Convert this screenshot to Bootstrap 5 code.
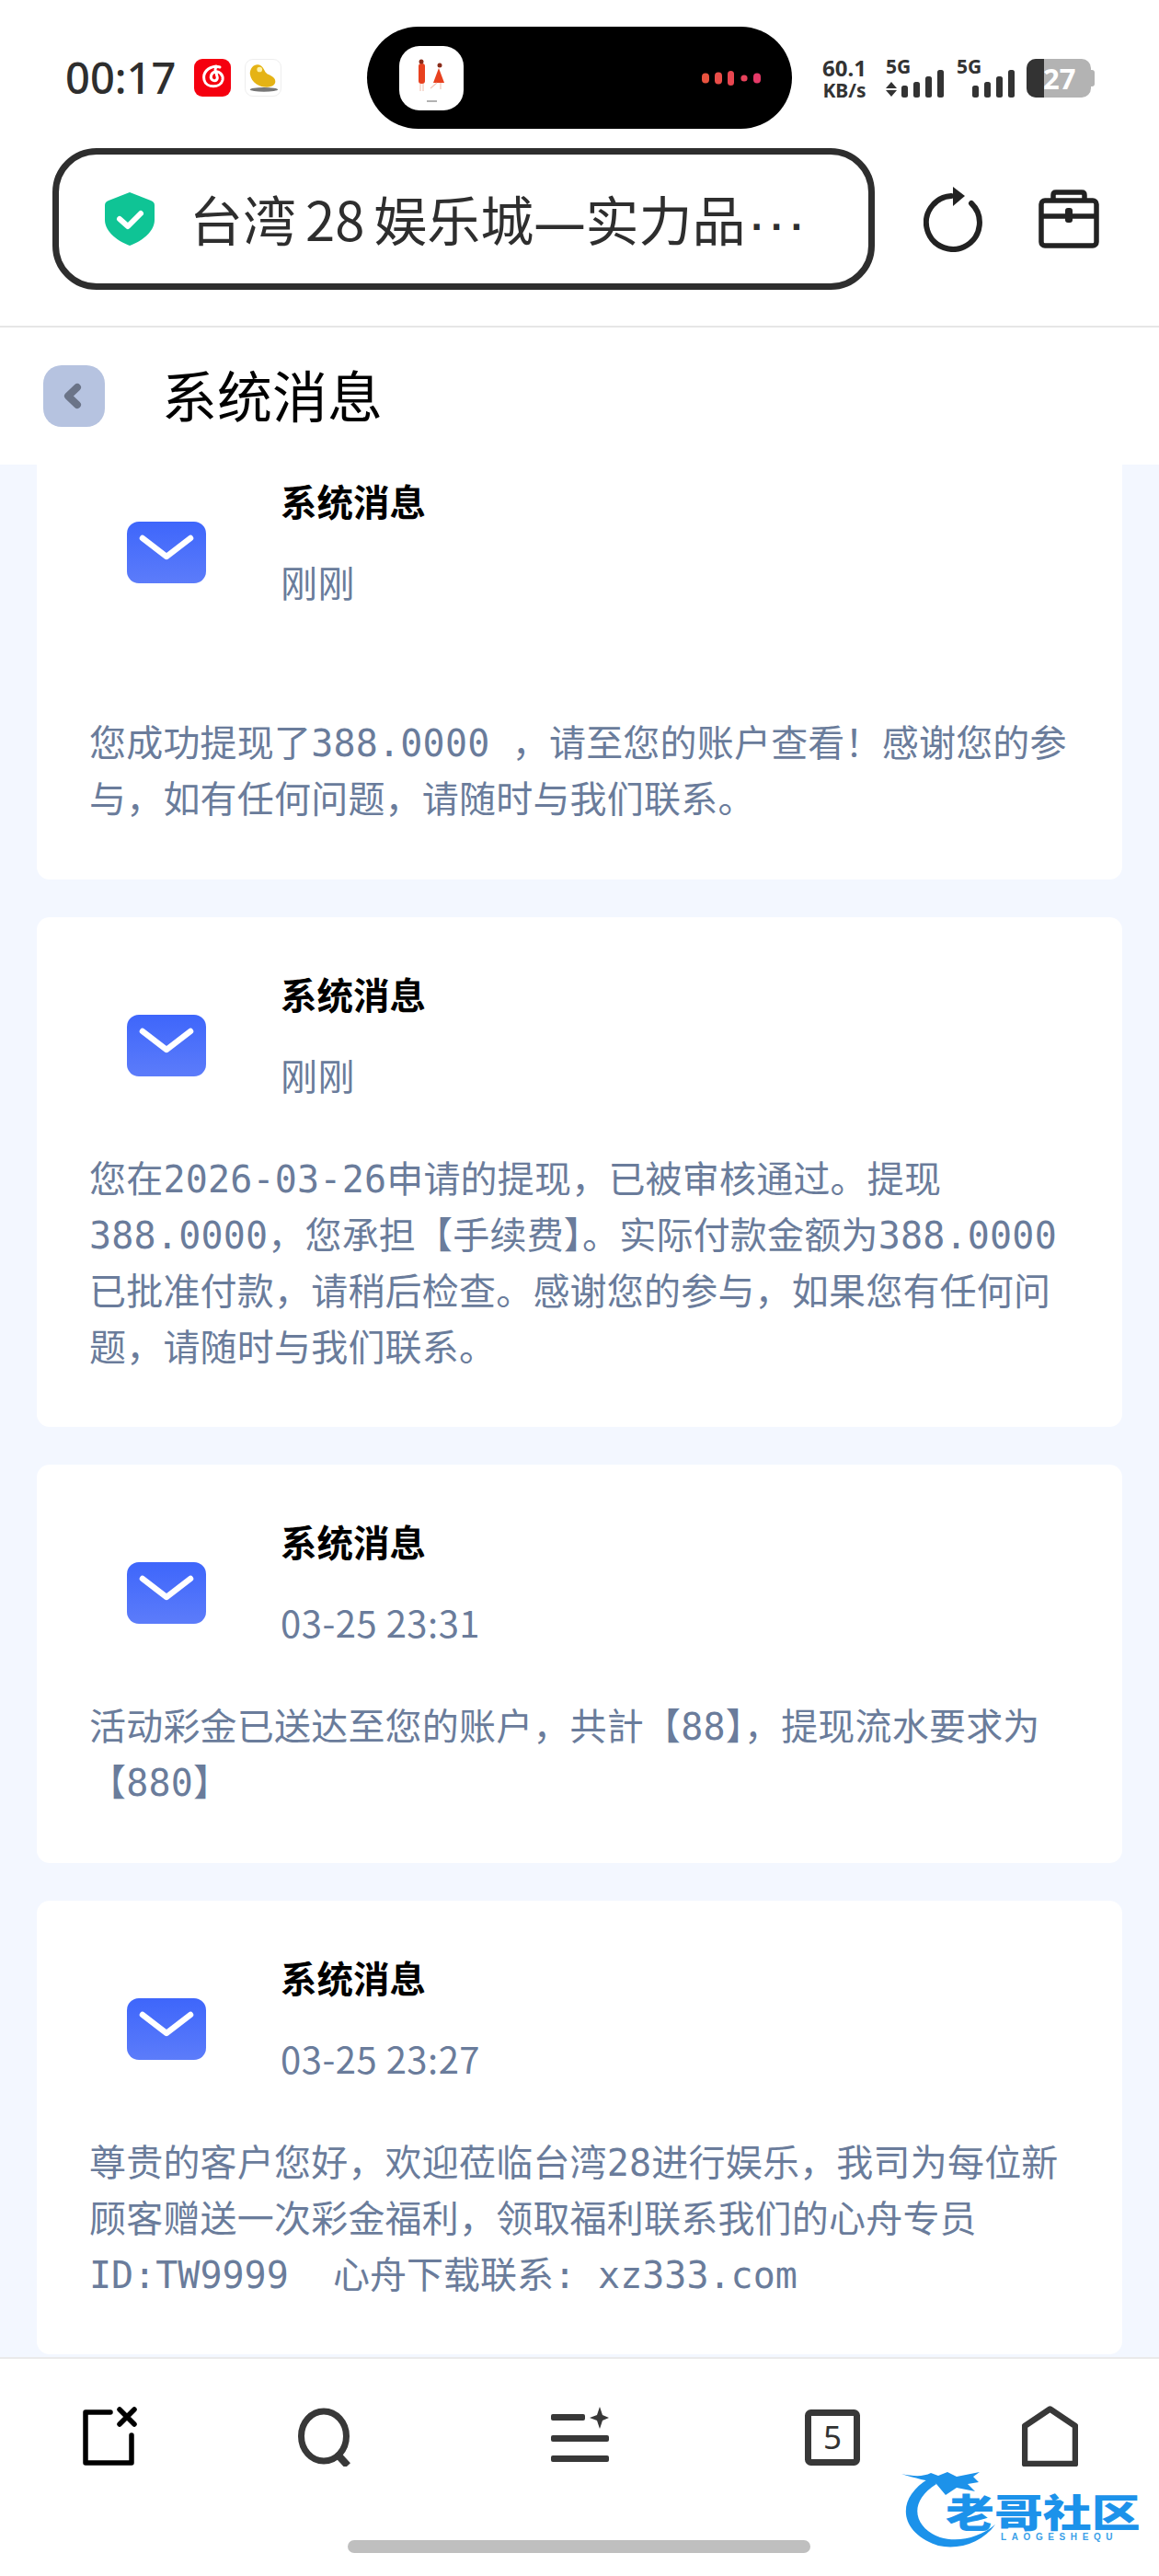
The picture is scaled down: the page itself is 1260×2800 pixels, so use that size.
<!DOCTYPE html>
<html lang="zh-CN">
<head>
<meta charset="UTF-8">
<title>系统消息</title>
<link href="https://cdn.jsdelivr.net/npm/bootstrap@5.3.3/dist/css/bootstrap.min.css" rel="stylesheet">
<script src="https://cdn.jsdelivr.net/npm/bootstrap@5.3.3/dist/js/bootstrap.bundle.min.js"></script>
<style>
html, body { margin: 0; background: #f3f7ff; }
body { width: 1260px; height: 2800px; overflow: hidden; font-family: "Noto Sans CJK SC", "Noto Sans", sans-serif; position: relative; }
.top-area { height: 356px; background: #fff; border-bottom: 2px solid #e6e6e6; padding-top: 29px; }
.status-row { height: 111px; padding-left: 71px; }
.clock { font: 500 47px/1 "Noto Sans", sans-serif; color: #2e2e2e; width: 140px; }
.app-ico { width: 40px; height: 41px; border-radius: 9px; flex: none; }
.ico-red { background: #f5000f; margin-right: 15px; }
.ico-bean { background: #fff; border: 1px solid #eee; }
.island { width: 462px; height: 111px; margin-left: 93px; background: #000; border-radius: 56px; padding: 0 34px 0 35px; flex: none; }
.island-art { width: 70px; height: 70px; background: #fff; border-radius: 22px; }
.speed { margin-left: 32px; width: 50px; color: #333; font: 700 24px/27px "Noto Sans", sans-serif; text-align: center; flex: none; }
.speed span { display: block; font-size: 21px; line-height: 22px; white-space: nowrap; }
.net-one { margin-left: 20px; flex: none; overflow: visible; }
.net-two { margin-left: 14px; flex: none; overflow: visible; }
.batt { width: 70px; height: 42px; margin-left: 13px; border-radius: 10px; background: #b3b3b3; color: #fff; font: 700 31px/42px "Noto Sans", sans-serif; overflow: hidden; position: relative; padding-left: 18px; flex: none; }
.batt i { position: absolute; left: 0; top: 0; bottom: 0; width: 19px; background: #333; }
.batt-tip { width: 4px; height: 18px; background: #b3b3b3; border-radius: 0 3px 3px 0; flex: none; }
.url-row { padding: 21px 0 0 57px; }
.url-box { width: 894px; height: 154px; border: 7px solid #2e2e2e; border-radius: 48px; padding-left: 50px; background: #fff; flex: none; }
.url-text { font-size: 58px; line-height: 1; color: #2e2e2e; margin-left: 38px; white-space: nowrap; word-spacing: -3px; }
.url-dash { font-family: "Noto Sans", sans-serif; font-size: 56px; }
.url-dots { font: 700 44px/1 "Liberation Sans", sans-serif; letter-spacing: 7px; margin-left: 6px; }
.ico-refresh { margin-left: 53px; flex: none; }
.ico-case { margin-left: 61px; flex: none; }
.title-row { height: 149px; background: #fff; padding-left: 47px; }
.back-btn { width: 67px; height: 67px; background: #b6c3e0; border-radius: 20px; }
.page-title { font-size: 60px; line-height: 1; color: #000; margin: -6px 0 0 62px; font-weight: 400; }
.msg-list { padding: 0 40px; }
.msg-card { background: #fff; border: 0; border-radius: 14px; margin-bottom: 41px; padding: 0 57px; }
.msg-card:first-child { border-radius: 0 0 14px 14px; }
.msg-head { padding-left: 40px; padding-top: 61px; }
.msg-card:first-child .msg-head { padding-top: 17px; }
.msg-ico { margin-right: 80px; margin-top: 45px; flex: none; }
.msg-info { margin-top: -2px; }
.msg-name { font-size: 39.500px; line-height: 48px; font-weight: 700; color: #000; }
.msg-time { font-size: 40px; line-height: 48px; color: #6a7c9b; margin-top: 40px; white-space: nowrap; letter-spacing: .5px; }
.msg-text { font: 40px/61px "DejaVu Sans Mono", "Noto Sans CJK SC", monospace; letter-spacing: .2px; color: #6a7c9b; margin: 60px 0 0; }
.msg-card:first-child .msg-text { margin-top: 122px; }
.plain-line { letter-spacing: 0; }
.bottom-bar { position: absolute; left: 0; right: 0; top: 2562px; height: 238px; background: #fff; border-top: 2px solid #eaeaea; }
.tool-row { padding: 51px 0 0 90px; }
.tool-two { margin-left: 175px; }
.tool-three { margin-left: 214px; }
.tool-four { margin-left: 213px; }
.tool-five { margin-left: 176px; }
.gesture { position: absolute; left: 378px; width: 503px; top: 2761px; height: 14px; border-radius: 7px; background: #bfbfbf; }
.logo-mark { position: absolute; left: 980px; top: 2680px; }
.logo-text { position: absolute; left: 1028px; top: 2706px; font-size: 42px; line-height: 46px; height: 46px; font-weight: 900; color: #1c92ea; white-space: nowrap; transform-origin: left top; transform: scaleX(1.26); }
.logo-sub-text { position: absolute; left: 1088px; top: 2753px; font: 700 10px/1 "Liberation Sans", sans-serif; letter-spacing: 5.6px; color: #3a9fe8; white-space: nowrap; }
</style>
</head>
<body>

<div class="top-area">
  <div class="status-row d-flex align-items-center">
    <div class="clock">00:17</div>
    <svg class="app-ico ico-red" viewBox="0 0 40 41"><path d="M24 8c-9 1-15 7-13 15 2 9 18 9 20 0 1-6-4-10-8-9-5 1-6 7-3 9 4 2 6-1 5-4l-2-7c0-3 2-4 5-3" fill="none" stroke="#fff" stroke-width="3" stroke-linecap="round"/></svg>
    <svg class="app-ico ico-bean" viewBox="0 0 40 41"><ellipse cx="21" cy="34" rx="16" ry="2.500" fill="#777"/><path d="M5 16C5 8 12 3 18 7c4 3 3 8 9 10 7 3 9 8 5 12-6 5-25 2-27-13z" fill="#e5b315"/><circle cx="16" cy="11" r="3" fill="#fff2a8"/></svg>
    <div class="island d-flex align-items-center justify-content-between">
      <svg class="island-art" viewBox="0 0 70 70"><rect x="21" y="19" width="7" height="22" rx="3" fill="#e8411f"/><circle cx="24" cy="17" r="2.500" fill="#8a2c1a"/><path d="M23 41v8M26 41v8" stroke="#f2c6b8" stroke-width="1.200"/><path d="M43 24l-6 16h12z" fill="#e8411f"/><circle cx="44" cy="21" r="2.500" fill="#8a2c1a"/><path d="M41 40l-7 6M45 40v7" stroke="#f2c6b8" stroke-width="1.200"/><path d="M30 60h11" stroke="#999" stroke-width="1.500"/></svg>
      <svg width="64" height="16" viewBox="0 0 64 16"><rect x="0" y="2.500" width="8" height="11" rx="4" fill="#e9533f"/><rect x="14" y="1.500" width="8" height="13" rx="4" fill="#ea4d48"/><rect x="28" y="0" width="7" height="16" rx="3.500" fill="#e84650"/><circle cx="46" cy="8" r="3.600" fill="#e8435c"/><rect x="56" y="2.500" width="8" height="11" rx="4" fill="#e63a68"/></svg>
    </div>
    <div class="speed">60.1<span>KB/s</span></div>
    <svg class="net-one" width="63" height="42" viewBox="0 0 63 42" fill="#333"><text x="0" y="16" font-family="Noto Sans" font-weight="700" font-size="21">5G</text><path d="M6 25l6 7H0zM6 41l6-7H0z"/><rect x="17" y="29" width="7" height="13" rx="2.500"/><rect x="30" y="25" width="7" height="17" rx="2.500"/><rect x="43" y="19" width="7" height="23" rx="2.500"/><rect x="56" y="12" width="7" height="30" rx="2.500"/></svg>
    <svg class="net-two" width="63" height="42" viewBox="0 0 63 42" fill="#333"><text x="0" y="16" font-family="Noto Sans" font-weight="700" font-size="21">5G</text><rect x="17" y="29" width="7" height="13" rx="2.500"/><rect x="30" y="25" width="7" height="17" rx="2.500"/><rect x="43" y="19" width="7" height="23" rx="2.500"/><rect x="56" y="12" width="7" height="30" rx="2.500"/></svg>
    <div class="batt">27<i></i></div><div class="batt-tip"></div>
  </div>
  <div class="url-row d-flex align-items-center">
    <div class="url-box d-flex align-items-center">
      <svg width="54" height="58" viewBox="0 0 54 58" class="flex-none"><path d="M27 0l23 9c2 1 4 2 4 5v16c0 14-16 24-27 28C16 54 0 44 0 30V14c0-3 2-4 4-5z" fill="#0fc495"/><path d="M16 29l9 8 14-14" fill="none" stroke="#fff" stroke-width="6" stroke-linecap="round" stroke-linejoin="round"/></svg>
      <div class="url-text">台湾 28 娱乐城<span class="url-dash">—</span>实力品<span class="url-dots">···</span></div>
    </div>
    <svg class="ico-refresh" width="64" height="71" viewBox="0 0 64 71" fill="none" stroke="#222" stroke-width="6"><path d="M52 18A29 29 0 1 1 30 10" stroke-linecap="round"/><path d="M32 0l13 10-13 11z" fill="#222" stroke="none"/></svg>
    <svg class="ico-case" width="66" height="64" viewBox="0 0 66 64" fill="none" stroke="#222" stroke-width="5.500" stroke-linejoin="round"><rect x="3" y="12" width="60" height="49" rx="4"/><path d="M16 12V6c0-2 1-3 3-3h28c2 0 3 1 3 3v6M3 29h60"/><rect x="29" y="20" width="8" height="16" rx="3" fill="#222" stroke="none"/></svg>
  </div>
</div>

<div class="title-row d-flex align-items-center">
  <div class="back-btn">
    <svg width="67" height="67" viewBox="0 0 67 67"><path d="M37 24L27 33.500 37 43" fill="none" stroke="#6b7488" stroke-width="8" stroke-linecap="round" stroke-linejoin="round"/></svg>
  </div>
  <h1 class="page-title">系统消息</h1>
</div>

<div class="msg-list">
  <div class="card msg-card" style="height:451px">
    <div class="msg-head d-flex align-items-start">
      <svg class="msg-ico" width="88" height="68" viewBox="0 0 88 68"><use href="#mailIcon"/></svg>
      <div class="msg-info">
        <div class="msg-name">系统消息</div>
        <div class="msg-time">刚刚</div>
      </div>
    </div>
    <p class="msg-text">您成功提现了388.0000 ，请至您的账户查看！感谢您的参与，如有任何问题，请随时与我们联系。</p>
  </div>

  <div class="card msg-card" style="height:554px">
    <div class="msg-head d-flex align-items-start">
      <svg class="msg-ico" width="88" height="68" viewBox="0 0 88 68"><use href="#mailIcon"/></svg>
      <div class="msg-info">
        <div class="msg-name">系统消息</div>
        <div class="msg-time">刚刚</div>
      </div>
    </div>
    <p class="msg-text">您在2026-03-26申请的提现，已被审核通过。提现388.0000，您承担【手续费】。实际付款金额为388.0000已批准付款，请稍后检查。感谢您的参与，如果您有任何问题，请随时与我们联系。</p>
  </div>

  <div class="card msg-card" style="height:433px">
    <div class="msg-head d-flex align-items-start">
      <svg class="msg-ico" width="88" height="68" viewBox="0 0 88 68"><use href="#mailIcon"/></svg>
      <div class="msg-info">
        <div class="msg-name">系统消息</div>
        <div class="msg-time">03-25 23:31</div>
      </div>
    </div>
    <p class="msg-text">活动彩金已送达至您的账户，共計【88】，提现流水要求为【880】</p>
  </div>

  <div class="card msg-card" style="height:493px">
    <div class="msg-head d-flex align-items-start">
      <svg class="msg-ico" width="88" height="68" viewBox="0 0 88 68"><use href="#mailIcon"/></svg>
      <div class="msg-info">
        <div class="msg-name">系统消息</div>
        <div class="msg-time">03-25 23:27</div>
      </div>
    </div>
    <p class="msg-text">尊贵的客户您好，欢迎莅临台湾28进行娱乐，我司为每位新顾客赠送一次彩金福利，领取福利联系我们的心舟专员<br><span class="plain-line">ID:TW9999&nbsp;&nbsp;心舟下载联系: xz333.com</span></p>
  </div>
</div>

<svg width="0" height="0" class="position-absolute">
  <defs>
    <linearGradient id="mailFill" x1="0" y1="0" x2="0" y2="1"><stop offset="0" stop-color="#3e66fb"/><stop offset="1" stop-color="#5c7cfa"/></linearGradient>
    <symbol id="mailIcon" viewBox="0 0 88 68"><rect x="1" y="0" width="86" height="67" rx="13" fill="url(#mailFill)"/><path d="M18 18l26 20 26-20" fill="none" stroke="#fff" stroke-width="6.500" stroke-linecap="round" stroke-linejoin="round"/></symbol>
  </defs>
</svg>

<div class="bottom-bar">
  <div class="tool-row d-flex align-items-start">
    <svg class="flex-none" width="59" height="66" viewBox="0 0 59 66" fill="none" stroke="#000" stroke-width="5.500" stroke-linecap="round" stroke-linejoin="round"><path d="M30 7H3v55h50V32"/><path d="M40 4l16 16M56 4L40 20"/></svg>
    <svg class="tool-two flex-none" width="61" height="66" viewBox="0 0 61 66" fill="none" stroke="#383838" stroke-width="7"><ellipse cx="28" cy="33" rx="24.500" ry="27"/><path d="M43 53l11 12" stroke-width="8"/></svg>
    <svg class="tool-three flex-none" width="63" height="66" viewBox="0 0 63 66" fill="#383838"><rect x="0" y="9" width="37" height="7" rx="2"/><rect x="0" y="32" width="63" height="7" rx="2"/><rect x="0" y="54" width="63" height="7" rx="2"/><path d="M53 1l3 9 7 3-7 3-3 9-3-9-8-3 8-3z"/></svg>
    <svg class="tool-four flex-none" width="60" height="66" viewBox="0 0 60 66"><rect x="3.500" y="7.500" width="53" height="54" rx="3" fill="none" stroke="#383838" stroke-width="7"/><text x="30" y="47" text-anchor="middle" font-family="Noto Sans" font-size="35" fill="#333">5</text></svg>
    <svg class="tool-five flex-none" width="61" height="66" viewBox="0 0 61 66" fill="none" stroke="#383838" stroke-width="6.500" stroke-linejoin="round"><path d="M30.500 3.500L58 22v41H3V22z"/></svg>
  </div>
</div>
<div class="gesture"></div>
<svg class="logo-mark" width="110" height="92" viewBox="0 0 110 92" fill="#1c92ea"><path d="M30 14C-6 35-4 72 40 87c22 5 48-3 62-23C85 78 62 84 42 78 14 68 6 40 38 20z"/><path d="M0 9c14 3 24 3 32-1l8 3 10-4 10 5 25-5-7 5 6 6-12 2 8 8-20-4-12 8-10-12C30 16 14 14 0 9z"/></svg>
<div class="logo-text">老哥社区</div>
<div class="logo-sub-text">LAOGESHEQU</div>
</body>
</html>
